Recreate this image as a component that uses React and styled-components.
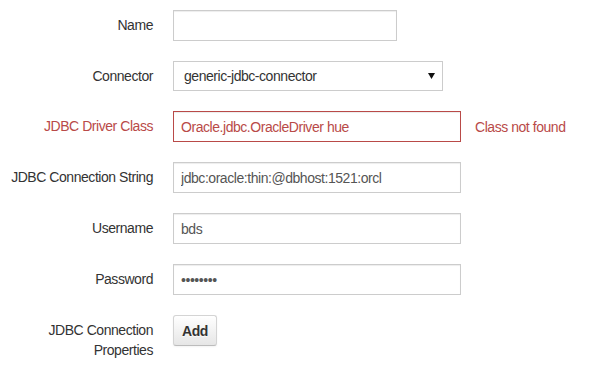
import React from 'react';
import styled, { createGlobalStyle } from 'styled-components';

const GlobalStyle = createGlobalStyle`
  body {
    margin: 0;
    background: #fff;
    font-family: 'Liberation Sans', Arial, sans-serif;
    font-size: 14px;
    letter-spacing: -0.45px;
    color: #333;
  }
`;

const Form = styled.form`
  display: flex;
  flex-direction: column;
  gap: 20px;

  padding-top: 10px;
`;

const Row = styled.div`
  display: flex;
  align-items: flex-start;
`;

const Label = styled.label`
  flex: 0 0 153px;
  margin-right: 20px;
  padding-top: 5px;

  line-height: 20px;
  text-align: right;
  color: ${(props) => (props.error ? '#b94a48' : '#333')};
`;

const Controls = styled.div`
  display: flex;
  align-items: center;
`;

const Input = styled.input`
  box-sizing: border-box;
  width: ${(props) => props.width || 288}px;
  height: 31px;
  padding: 4px 7px;

  font-family: inherit;
  font-size: 14px;
  letter-spacing: -0.45px;
  color: ${(props) => (props.error ? '#b94a48' : '#555')};

  background-color: #fff;
  border: 1px solid ${(props) => (props.error ? '#b94a48' : '#ccc')};
  border-radius: 0;
  box-shadow: inset 0 1px 1px rgba(0, 0, 0, 0.075);
  outline: none;
`;

const Select = styled.div`
  box-sizing: border-box;
  display: flex;
  align-items: center;
  justify-content: space-between;

  width: 270px;
  height: 30px;
  padding: 0 7px 0 10px;

  color: #333;
  background-color: #fff;
  border: 1px solid #ccc;
`;

const Arrow = styled.svg`
  width: 7px;
  height: 6px;
`;

const HelpText = styled.span`
  margin-left: 14px;
  color: #b94a48;
`;

const Button = styled.button.attrs(() => ({
  type: 'button',
}))`
  box-sizing: border-box;
  height: 31px;
  padding: 0 8px;

  font-family: inherit;
  font-size: 14px;
  font-weight: bold;
  letter-spacing: -0.45px;
  color: #333;
  text-shadow: 0 1px 1px rgba(255, 255, 255, 0.75);

  background-image: linear-gradient(to bottom, #ffffff, #e6e6e6);
  border: 1px solid #d4d4d4;
  border-bottom-color: #bcbcbc;
  border-radius: 3px;
  box-shadow: inset 0 1px 0 rgba(255, 255, 255, 0.2), 0 1px 2px rgba(0, 0, 0, 0.05);
  cursor: pointer;
`;

const App = () => (
  <>
    <GlobalStyle />
    <Form>
      <Row>
        <Label>Name</Label>
        <Controls>
          <Input width={224} defaultValue="" />
        </Controls>
      </Row>
      <Row>
        <Label>Connector</Label>
        <Controls>
          <Select>
            <span>generic-jdbc-connector</span>
            <Arrow viewBox="0 0 7 6">
              <path d="M0 0 H7 L3.5 6 Z" fill="#111" />
            </Arrow>
          </Select>
        </Controls>
      </Row>
      <Row>
        <Label error>JDBC Driver Class</Label>
        <Controls>
          <Input error defaultValue="Oracle.jdbc.OracleDriver hue" />
          <HelpText>Class not found</HelpText>
        </Controls>
      </Row>
      <Row>
        <Label>JDBC Connection String</Label>
        <Controls>
          <Input defaultValue="jdbc:oracle:thin:@dbhost:1521:orcl" />
        </Controls>
      </Row>
      <Row>
        <Label>Username</Label>
        <Controls>
          <Input defaultValue="bds" />
        </Controls>
      </Row>
      <Row>
        <Label>Password</Label>
        <Controls>
          <Input type="password" defaultValue="password" />
        </Controls>
      </Row>
      <Row>
        <Label>JDBC Connection Properties</Label>
        <Controls>
          <Button>Add</Button>
        </Controls>
      </Row>
    </Form>
  </>
);

export default App;
